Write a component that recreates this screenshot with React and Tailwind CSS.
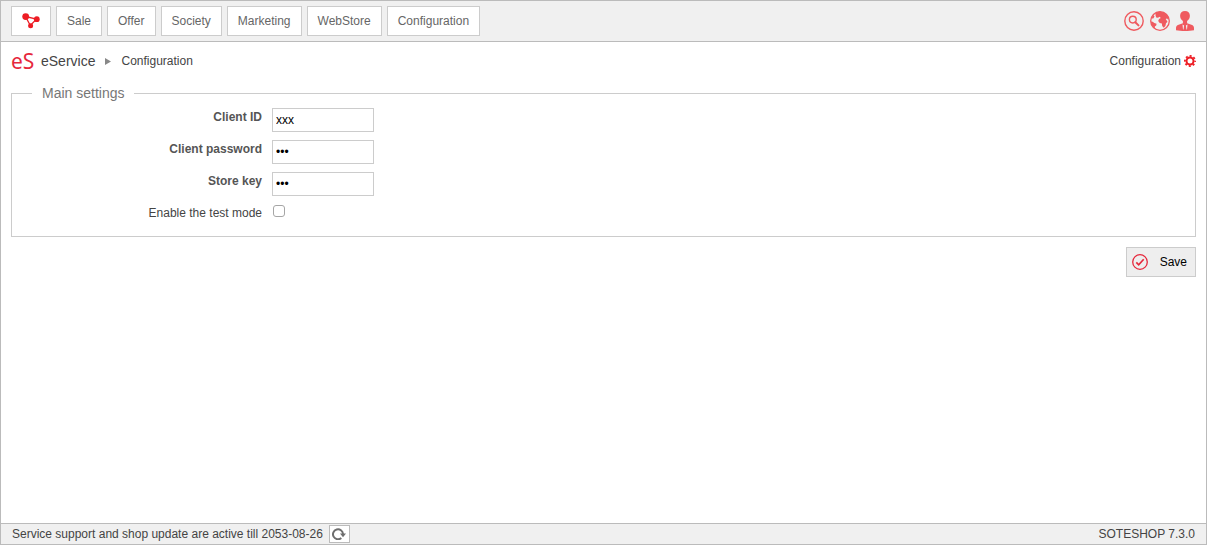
import React from "react";

const menu = ["Sale", "Offer", "Society", "Marketing", "WebStore", "Configuration"];

const fields = [
  { id: "client-id", label: "Client ID", type: "text", value: "xxx" },
  { id: "client-password", label: "Client password", type: "password", value: "xxx" },
  { id: "store-key", label: "Store key", type: "password", value: "xxx" },
];

function NetworkIcon() {
  return (
    <svg width="18" height="16" viewBox="0 0 18 16" fill="#ed1c24">
      <path d="M3.5 3.5 14.5 6.2 8.3 12.500Z" fill="none" stroke="#ed1c24" strokeWidth="1.300" />
      <circle cx="3.700" cy="3.600" r="3.400" />
      <circle cx="14.800" cy="6.200" r="2.900" />
      <circle cx="8.600" cy="12.700" r="2.500" />
    </svg>
  );
}

function SearchIcon() {
  return (
    <svg width="20" height="20" viewBox="0 0 20 20" fill="none" stroke="#ef5a5f">
      <circle cx="10" cy="10" r="9.200" strokeWidth="1.400" />
      <circle cx="8.800" cy="8.600" r="3.400" strokeWidth="1.400" />
      <path d="m11.300 11.200 3.200 3.200" strokeWidth="2" strokeLinecap="round" />
    </svg>
  );
}

function GlobeIcon() {
  return (
    <svg width="20" height="20" viewBox="0 0 20 20">
      <circle cx="10" cy="10" r="9.300" fill="#f0f0f0" stroke="#ef5a5f" strokeWidth="1.300" />
      <path
        d="M5.500 2C7 1 8.500.7 10 .7c4.200 0 7.700 2.800 8.900 6.600l-.7 1.500-1.200-1.300-1.300.6 1.800 2.700-1.500 1.500-.6 2.700-1.700 1.700-1.500-1.600-.3-2.600-2.200-.6-1.500-1.800.8-2.200 1.800-.9-1.300-1.200-1.500 1-1.800-.4L5.500 4.300Z"
        fill="#ef5a5f"
      />
      <path d="m.9 10.500 1.800.2 1.600 1.300 2.300.8-.4 1.700-1.400 1 .3 1.800C2.600 15.900 1 13.500.9 10.500ZM1.300 7.500 3.500 4l1 1.400-1.200 2Z" fill="#ef5a5f" />
    </svg>
  );
}

function UserIcon() {
  return (
    <svg width="18" height="20" viewBox="0 0 18 20" fill="#ef5a5f">
      <path d="M9 0c3 0 4.900 2 4.900 4.800 0 2.300-1.300 4.300-2.800 5.300v2.100l5 1.700c1.200.5 1.900 1.600 1.900 3v2.400c-2.500.5-5.500.7-9 .7s-6.500-.2-9-.7v-2.400c0-1.400.7-2.500 1.900-3l5-1.700v-2.100C5.400 9.100 4.100 7.100 4.100 4.800 4.100 2 6 0 9 0Z" />
      <path d="m6.500 13.500 1.600 1-.6 4H7ZM11.500 13.500l-1.600 1 .6 4h.5Z" fill="#f0f0f0" />
    </svg>
  );
}

function GearIcon() {
  return (
    <svg width="12" height="12" viewBox="0 0 12 12" fill="none" stroke="#ed1c24">
      <circle cx="6" cy="6" r="3.500" strokeWidth="2" />
      <circle cx="6" cy="6" r="5.100" strokeWidth="1.800" strokeDasharray="2 2.005" strokeDashoffset="1" />
    </svg>
  );
}

function CheckIcon() {
  return (
    <svg width="16" height="16" viewBox="0 0 16 16" fill="none" stroke="#e6283c">
      <circle cx="8" cy="8" r="7.300" strokeWidth="1.300" />
      <path d="m4.300 8.400 2.400 2.400 5-5.500" strokeWidth="1.700" />
    </svg>
  );
}

function ReloadIcon() {
  return (
    <svg width="14" height="12" viewBox="0 0 14 12">
      <path d="M9.300 10A5 5 0 1 1 11 6" fill="none" stroke="#6e6e6e" strokeWidth="2" />
      <path d="M8 5.600h6l-3 3.600Z" fill="#6e6e6e" />
    </svg>
  );
}

export default function App() {
  return (
    <div className="flex min-h-screen flex-col border border-[#bbbbbb] bg-white font-['Liberation_Sans',Arial,sans-serif] text-xs text-[#444444]">
      <header className="flex items-center justify-between border-b border-[#bbbbbb] bg-[#f0f0f0] py-[5px] pr-3 pl-[10px]">
        <nav className="flex gap-[5px]">
          <a href="#home" aria-label="Home" className="flex h-[30px] w-10 items-center justify-center border border-[#cccccc] bg-white">
            <NetworkIcon />
          </a>
          {menu.map((item) => (
            <a key={item} href={"#" + item.toLowerCase()} className="flex h-[30px] items-center border border-[#cccccc] bg-white px-[10px] text-[#666666]">
              {item}
            </a>
          ))}
        </nav>
        <div className="flex items-center gap-[6px]">
          <button type="button" aria-label="Search"><SearchIcon /></button>
          <button type="button" aria-label="Language"><GlobeIcon /></button>
          <button type="button" aria-label="Account"><UserIcon /></button>
        </div>
      </header>

      <main className="flex-1 px-[10px]">
        <div className="flex h-[38px] items-center justify-between">
          <div className="flex items-center">
            <span className="w-[30px] font-['Noto_Sans',sans-serif] text-[21px] leading-6 text-[#e6283c]">eS</span>
            <h1 className="text-sm">eService</h1>
            <svg width="6" height="7" viewBox="0 0 6 7" className="mx-[10px]" fill="#888888">
              <path d="M0 0 6 3.500 0 7Z" />
            </svg>
            <span>Configuration</span>
          </div>
          <a href="#settings" className="flex items-center gap-[3px]">
            Configuration
            <GearIcon />
          </a>
        </div>

        <form>
          <fieldset className="mt-1 border border-[#cccccc] pt-[6px] pb-[14px]">
            <legend className="ml-5 px-[10px] text-sm leading-[18px] text-[#777777]">Main settings</legend>
            <div className="flex flex-col gap-2">
              {fields.map((f) => (
                <div key={f.id} className="flex items-start gap-[10px]">
                  <label htmlFor={f.id} className="w-[250px] text-right leading-[18px] font-bold text-[#555555]">{f.label}</label>
                  <input
                    id={f.id}
                    type={f.type}
                    defaultValue={f.value}
                    className="h-6 w-[102px] border border-[#cccccc] bg-white px-[3px] text-xs text-black"
                  />
                </div>
              ))}
              <div className="flex items-start gap-[10px]">
                <label htmlFor="test-mode" className="w-[250px] text-right leading-[18px]">Enable the test mode</label>
                <input id="test-mode" type="checkbox" className="mx-px mt-px size-3 appearance-none rounded-[3px] border border-[#a6a6a6] bg-white checked:bg-[#e6283c]" />
              </div>
            </div>
          </fieldset>
          <div className="mt-[10px] flex justify-end">
            <button type="submit" className="flex h-[30px] items-center gap-3 border border-[#cccccc] bg-[#eeeeee] pr-2 pl-[5px] text-black">
              <CheckIcon />
              Save
            </button>
          </div>
        </form>
      </main>

      <footer className="flex h-[21px] items-center justify-between border-t border-[#bbbbbb] bg-[#f0f0f0] px-[11px]">
        <div className="flex items-center gap-[6px]">
          <span>Service support and shop update are active till 2053-08-26</span>
          <button type="button" aria-label="Refresh" className="flex h-[18px] w-[21px] items-center justify-center border border-[#bbbbbb] bg-white">
            <ReloadIcon />
          </button>
        </div>
        <span>SOTESHOP 7.3.0</span>
      </footer>
    </div>
  );
}
